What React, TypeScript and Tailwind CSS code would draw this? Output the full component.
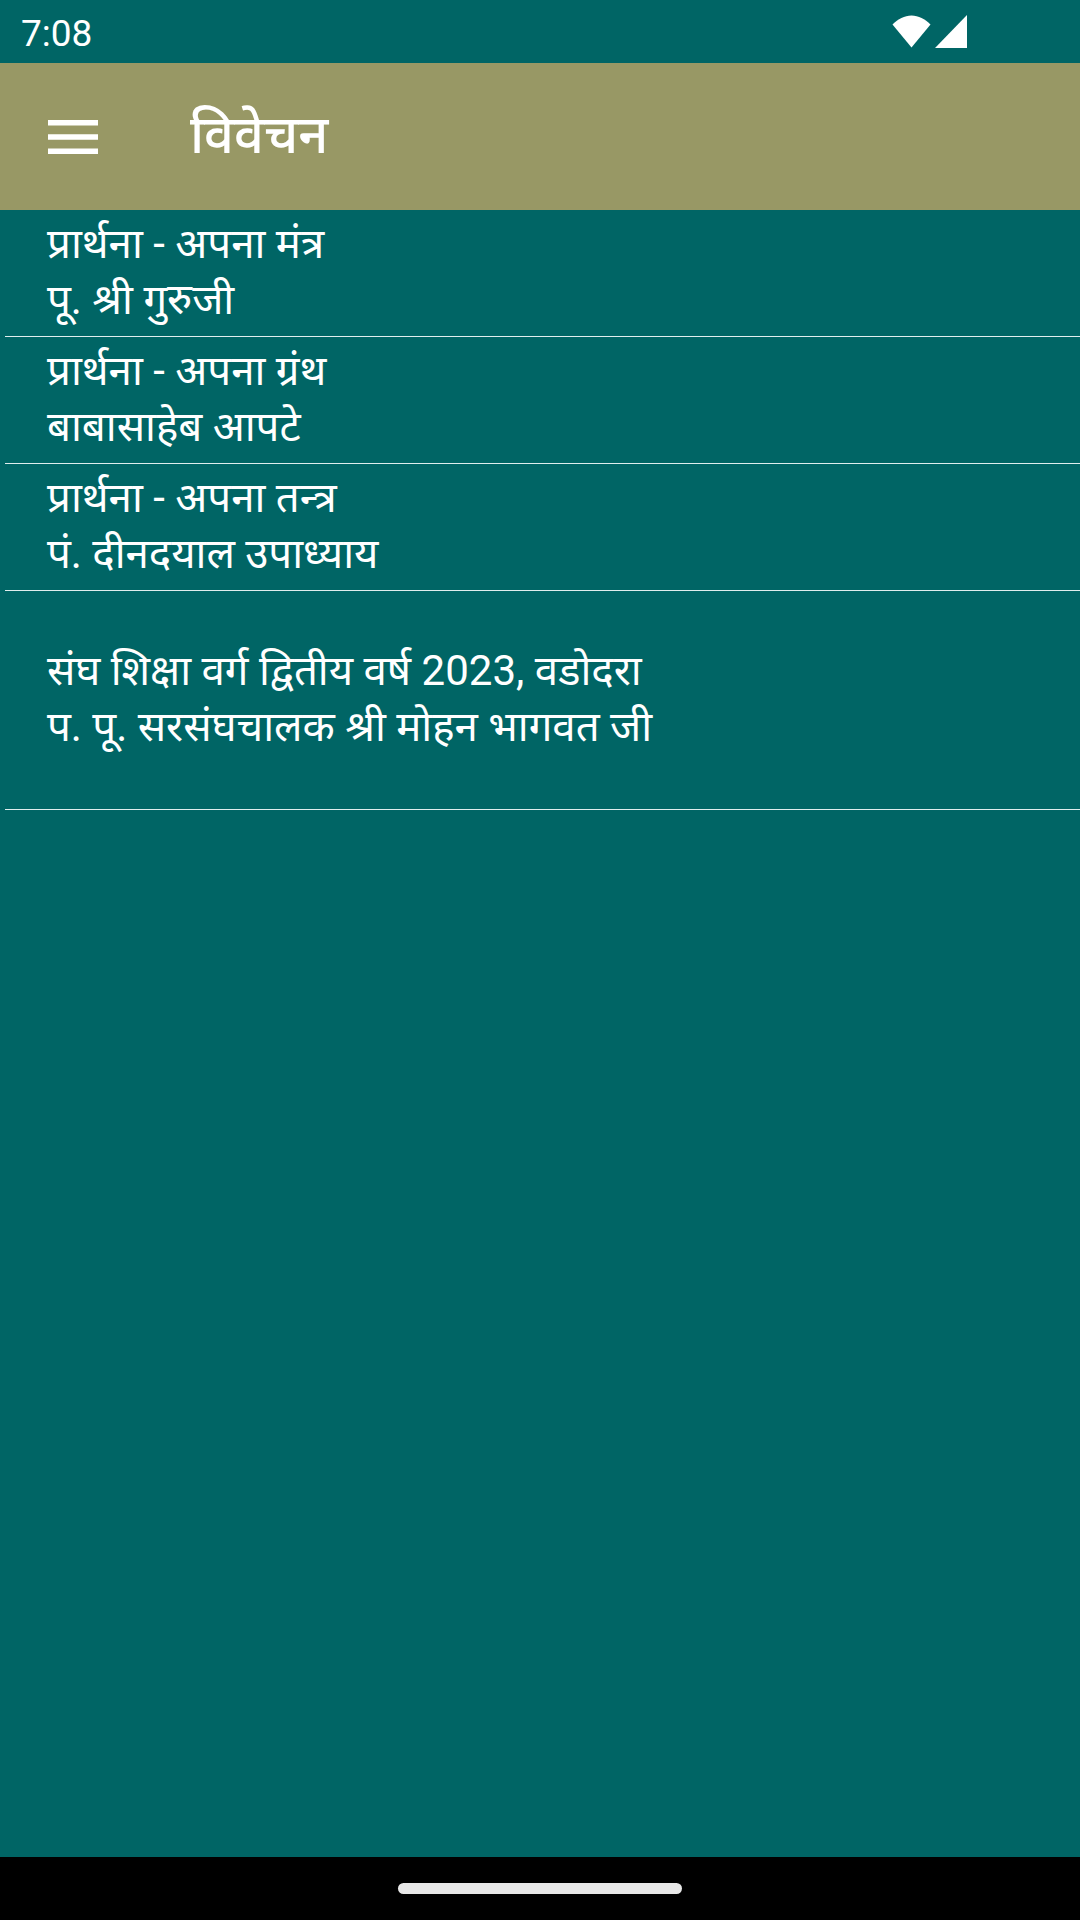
const items = [
  ['प्रार्थना - अपना मंत्र', 'पू. श्री गुरुजी'],
  ['प्रार्थना - अपना ग्रंथ', 'बाबासाहेब आपटे'],
  ['प्रार्थना - अपना तन्त्र', 'पं. दीनदयाल उपाध्याय'],
];

export default function App() {
  return (
    <div className="flex h-[1920px] w-[1080px] flex-col overflow-hidden bg-[#006565] font-['Roboto','Noto_Sans','Noto_Sans_Devanagari',sans-serif] text-white">
      <div className="flex h-[63px] shrink-0 items-center justify-between pl-[21px] pr-[113px]">
        <span className="pt-[3px] text-[37px] leading-none">7:08</span>
        <div className="flex items-center gap-[4px]">
          <svg width="39" height="33" viewBox="0 0 39 33">
            <path d="M19.500 32.500 0.500 9.500C6 4 12.500 0.500 19.500 0.500S33 4 38.500 9.500Z" fill="#fff" />
          </svg>
          <svg width="32" height="33" viewBox="0 0 32 33">
            <path d="M32 0V33H0Z" fill="#fff" />
          </svg>
        </div>
      </div>

      <div className="flex h-[147px] shrink-0 items-center bg-[#989865] pl-[48px]">
        <svg width="50" height="34" viewBox="0 0 50 34" className="shrink-0">
          <path d="M0 2.750H50M0 17H50M0 31.250H50" stroke="#fff" strokeWidth="5.500" />
        </svg>
        <h1 className="ml-[92px] pb-[2px] text-[52.5px] font-medium leading-none">विवेचन</h1>
      </div>

      <div className="flex-1 pl-[5px]">
        {items.map((item) => (
          <div key={item[0]} className="flex h-[127px] flex-col justify-center border-b border-[#e0eeee] pb-[2px] pl-[42px] text-[42px] leading-[56px]">
            <p>{item[0]}</p>
            <p>{item[1]}</p>
          </div>
        ))}
        <div className="flex h-[219px] flex-col justify-center border-b border-[#e0eeee] pb-[2px] pl-[42px] text-[42px] leading-[56px]">
          <p>संघ शिक्षा वर्ग द्वितीय वर्ष 2023, वडोदरा</p>
          <p>प. पू. सरसंघचालक श्री मोहन भागवत जी</p>
        </div>
      </div>

      <div className="flex h-[63px] shrink-0 items-start justify-center bg-black pt-[26px]">
        <div className="h-[11px] w-[284px] rounded-full bg-[#e8e8e8]" />
      </div>
    </div>
  );
}
